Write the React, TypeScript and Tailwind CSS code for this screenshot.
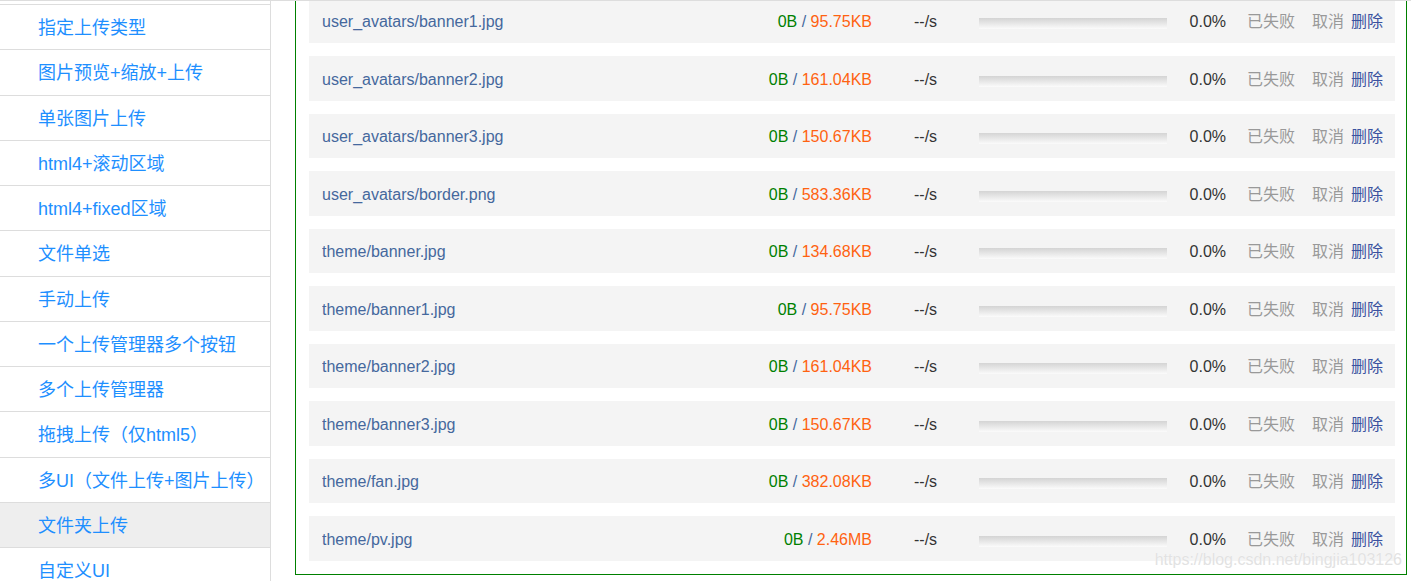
import React from "react";

const menu = [
  "指定上传类型",
  "图片预览+缩放+上传",
  "单张图片上传",
  "html4+滚动区域",
  "html4+fixed区域",
  "文件单选",
  "手动上传",
  "一个上传管理器多个按钮",
  "多个上传管理器",
  "拖拽上传（仅html5）",
  "多UI（文件上传+图片上传）",
  "文件夹上传",
  "自定义UI",
];

const files = [
  { name: "user_avatars/banner1.jpg", size: "95.75KB" },
  { name: "user_avatars/banner2.jpg", size: "161.04KB" },
  { name: "user_avatars/banner3.jpg", size: "150.67KB" },
  { name: "user_avatars/border.png", size: "583.36KB" },
  { name: "theme/banner.jpg", size: "134.68KB" },
  { name: "theme/banner1.jpg", size: "95.75KB" },
  { name: "theme/banner2.jpg", size: "161.04KB" },
  { name: "theme/banner3.jpg", size: "150.67KB" },
  { name: "theme/fan.jpg", size: "382.08KB" },
  { name: "theme/pv.jpg", size: "2.46MB" },
];

export default function App() {
  return (
    <div
      className="relative h-[581px] w-[1411px] overflow-hidden bg-white"
      style={{ fontFamily: '"Liberation Sans", Arial, "Noto Sans CJK SC", sans-serif' }}
    >
      {/* header edge */}
      <div className="h-px w-full bg-[#dddddd]" />

      <div className="flex h-[580px]">
        {/* side menu */}
        <div className="w-[271px] shrink-0 border-r border-[#dddddd]">
          <div className="h-[4px] border-b border-[#dddddd]" />
          {menu.map((item) => (
            <div
              key={item}
              className={`flex h-[45.25px] items-center border-b border-[#dddddd] pl-[38px] pt-[3px] text-[18px] text-[#1e8fff] ${
                item === "文件夹上传" ? "bg-[#eeeeee]" : ""
              }`}
            >
              {item}
            </div>
          ))}
        </div>

        {/* upload list */}
        <div className="ml-[24px] mr-[4px] h-[574px] flex-1 overflow-hidden border-x border-b border-[#008000] pl-[13px] pr-[11px]">
          <div className="-mt-[2.2px]">
            {files.map((f, i) => (
              <div
                key={f.name}
                className={`flex h-[44.5px] items-center bg-[#f4f4f4] pl-[13px] pr-[12px] pt-[2px] text-[16px] ${
                  i === 0 ? "" : "mt-[13px]"
                }`}
              >
                <div className="min-w-0 flex-1 truncate text-[#45689d]">{f.name}</div>
                <div className="w-[200px] text-right">
                  <span className="text-[#008000]">0B</span>
                  <span className="text-[#45689d]"> / </span>
                  <span className="text-[#ff6210]">{f.size}</span>
                </div>
                <div className="ml-[42px] w-[65px] text-[#333333]">--/s</div>
                <div className="mt-[3px] h-[11px] w-[188px] bg-linear-to-b from-[#d4d4d4] to-[#fbfbfb]" />
                <div className="w-[59px] text-right text-[#333333]">0.0%</div>
                <div className="ml-[21px] w-[65px] text-[#999999]">已失败</div>
                <div className="w-[39px] text-[#999999]">取消</div>
                <div className="w-[32px] text-[#3a52a0]">删除</div>
              </div>
            ))}
          </div>
        </div>
      </div>

      {/* watermark */}
      <div className="pointer-events-none absolute bottom-[9px] right-[9px] text-[16px] text-[#e2e2e2] [text-shadow:0_0_1px_#ffffff]">
        https://blog.csdn.net/bingjia103126
      </div>
    </div>
  );
}
